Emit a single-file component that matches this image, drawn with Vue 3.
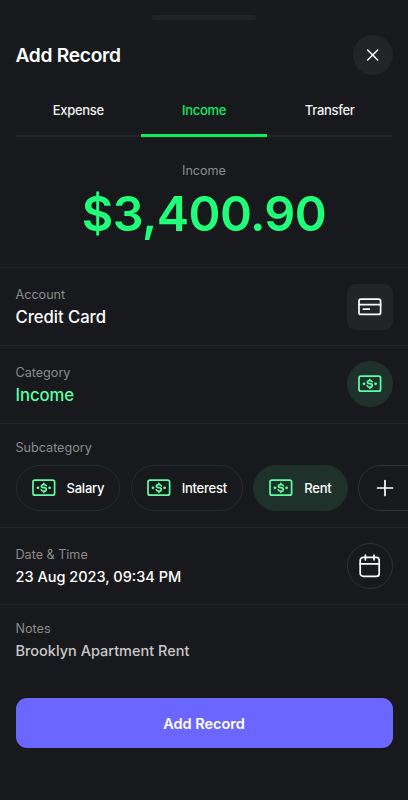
<template>
  <div class="record-sheet">
    <div class="drag-handle"></div>

    <header class="sheet-header">
      <h1 class="sheet-title">Add Record</h1>
      <button class="close-btn" aria-label="Close">
        <svg width="40" height="40" viewBox="0 0 40 40">
          <path d="M14.7 15 L24.7 25 M24.7 15 L14.7 25" />
        </svg>
      </button>
    </header>

    <nav class="tabs">
      <button
        v-for="tab in tabs"
        :key="tab"
        class="tab"
        :class="{ active: tab === activeTab }"
        @click="activeTab = tab"
      >{{ tab }}</button>
    </nav>

    <section class="amount-block">
      <span class="label">{{ activeTab }}</span>
      <strong class="amount">$3,400.90</strong>
    </section>

    <section class="row">
      <div class="field">
        <span class="label">Account</span>
        <span class="value">Credit Card</span>
      </div>
      <div class="icon-box square">
        <svg width="24" height="24" viewBox="0 0 24 24">
          <rect x="1" y="4.2" width="21.6" height="15.2" rx="2" />
          <path d="M1 9.6 H22.6 M5.4 14.2 H11.4" />
        </svg>
      </div>
    </section>

    <section class="row">
      <div class="field">
        <span class="label">Category</span>
        <span class="value income">Income</span>
      </div>
      <div class="icon-box tinted">
        <svg class="cash" width="24" height="24" viewBox="0 0 24 24">
          <rect x="1" y="4.2" width="21.6" height="15" rx="2" />
          <path d="M14.3 9.8 C13.9 8.8 13 8.5 11.8 8.5 C10.3 8.5 9.4 9.2 9.4 10.2 C9.4 11.3 10.4 11.5 11.8 11.7 C13.3 11.9 14.3 12.3 14.3 13.4 C14.3 14.5 13.3 15.1 11.8 15.1 C10.5 15.1 9.6 14.7 9.2 13.7 M11.8 7.3 V8.6 M11.8 15 V16.3" />
          <circle cx="6" cy="11.8" r="1.4" />
          <circle cx="17.6" cy="11.8" r="1.4" />
        </svg>
      </div>
    </section>

    <section class="subcategory">
      <span class="label">Subcategory</span>
      <div class="chips">
        <button
          v-for="item in subcategories"
          :key="item"
          class="chip"
          :class="{ selected: item === selected }"
          @click="selected = item"
        >
          <svg class="cash" width="24" height="24" viewBox="0 0 24 24">
            <rect x="1" y="4.2" width="21.6" height="15" rx="2" />
            <path d="M14.3 9.8 C13.9 8.8 13 8.5 11.8 8.5 C10.3 8.5 9.4 9.2 9.4 10.2 C9.4 11.3 10.4 11.5 11.8 11.7 C13.3 11.9 14.3 12.3 14.3 13.4 C14.3 14.5 13.3 15.1 11.8 15.1 C10.5 15.1 9.6 14.7 9.2 13.7 M11.8 7.3 V8.6 M11.8 15 V16.3" />
            <circle cx="6" cy="11.8" r="1.4" />
            <circle cx="17.6" cy="11.8" r="1.4" />
          </svg>
          <span>{{ item }}</span>
        </button>
        <button class="chip add" aria-label="Add subcategory">
          <svg width="24" height="24" viewBox="0 0 24 24">
            <path d="M12 4.5 V19.5 M4.5 12 H19.5" />
          </svg>
        </button>
      </div>
    </section>

    <section class="row date-row">
      <div class="field">
        <span class="label">Date &amp; Time</span>
        <span class="value date">23 Aug 2023, 09:34 PM</span>
      </div>
      <div class="icon-box outlined">
        <svg width="24" height="24" viewBox="0 0 24 24">
          <rect x="2.2" y="3.4" width="19" height="19" rx="3" />
          <path d="M2.2 9.9 H21.2 M7.4 1.2 V5.8 M16 1.2 V5.8" />
        </svg>
      </div>
    </section>

    <section class="notes">
      <span class="label">Notes</span>
      <span class="value note">Brooklyn Apartment Rent</span>
    </section>

    <button class="submit-btn">Add Record</button>
  </div>
</template>

<script setup>
import { ref } from 'vue'

const tabs = ['Expense', 'Income', 'Transfer']
const activeTab = ref('Income')

const subcategories = ['Salary', 'Interest', 'Rent']
const selected = ref('Rent')
</script>

<style>
body {
  background: #18191c;
}
</style>

<style scoped>
.record-sheet {
  box-sizing: border-box;
  width: 100%;
  height: 800px;
  padding-top: 15px;
  overflow: hidden;
  display: flex;
  flex-direction: column;
  background: #18191c;
  color: #fff;
  font-family: Inter, "Liberation Sans", sans-serif;
}

.record-sheet * {
  box-sizing: border-box;
}

button {
  padding: 0;
  border: none;
  background: none;
  color: inherit;
  font-family: inherit;
  cursor: pointer;
}

svg {
  display: block;
  flex: none;
  fill: none;
  stroke: #fff;
  stroke-width: 1.7;
  stroke-linecap: round;
  stroke-linejoin: round;
}

.drag-handle {
  flex: none;
  align-self: center;
  width: 104px;
  height: 5px;
  border-radius: 3px;
  background: #222327;
}

/* --- Header --- */
.sheet-header {
  flex: none;
  display: flex;
  align-items: center;
  justify-content: space-between;
  height: 40px;
  margin-top: 15px;
  padding: 0 15.5px;
}

.sheet-title {
  margin: 0;
  font-size: 19.2px;
  font-weight: 600;
  line-height: 24px;
  letter-spacing: -0.3px;
}

.close-btn {
  width: 40px;
  height: 40px;
  border-radius: 50%;
  background: #232428;
}

.close-btn svg {
  stroke-width: 1.5;
}

/* --- Tabs --- */
.tabs {
  flex: none;
  display: grid;
  grid-template-columns: repeat(3, 1fr);
  height: 52px;
  margin: 10px 15.5px 0;
  box-shadow: inset 0 -2px 0 #232428;
}

.tab {
  font-size: 13px;
  font-weight: 500;
  letter-spacing: -0.3px;
  color: #f1f1f2;
  border-bottom: 3px solid transparent;
}

.tab.active {
  color: #08ee60;
  border-bottom-color: #08ee60;
}

/* --- Amount --- */
.amount-block {
  flex: none;
  display: flex;
  flex-direction: column;
  align-items: center;
  height: 130.4px;
  padding-top: 25px;
}

.label {
  font-size: 12.6px;
  font-weight: 400;
  line-height: 18px;
  color: #8a8b8d;
}

.amount {
  margin-top: 5px;
  font-size: 48.5px;
  font-weight: 600;
  line-height: 58px;
  letter-spacing: -0.6px;
  color: #20ff79;
}

/* --- Rows --- */
.row {
  flex: none;
  display: flex;
  align-items: center;
  justify-content: space-between;
  height: 77.6px;
  padding: 0 15.5px;
  border-top: 1px solid #232428;
}

.field {
  display: flex;
  flex-direction: column;
  padding-top: 3px;
}

.date-row .field {
  padding-top: 4px;
}

.value {
  font-size: 16.7px;
  font-weight: 500;
  line-height: 26px;
  letter-spacing: -0.05px;
}

.value.income {
  color: #5dffa2;
}

.value.date,
.value.note {
  font-size: 14.5px;
  letter-spacing: 0;
}

.value.note {
  color: #c9c9ca;
}

.icon-box {
  display: flex;
  align-items: center;
  justify-content: center;
  width: 46px;
  height: 46px;
  border-radius: 50%;
}

.icon-box.square {
  border-radius: 9px;
  background: #232428;
}

.icon-box.tinted {
  background: #1f312b;
}

.icon-box.outlined {
  border: 1px solid #303135;
}

.cash {
  stroke: #5dffa2;
}

.cash circle {
  fill: #5dffa2;
  stroke: none;
}

/* --- Subcategory --- */
.subcategory {
  flex: none;
  height: 104.2px;
  padding: 15px 0 0 15.5px;
  border-top: 1px solid #232428;
  overflow: hidden;
}

.subcategory .label {
  display: block;
}

.chips {
  display: flex;
  gap: 10.3px;
  margin-top: 8px;
}

.chip {
  flex: none;
  display: flex;
  align-items: center;
  gap: 11px;
  height: 46px;
  padding: 0 15px;
  border: 1px solid #1f312b;
  border-radius: 23px;
  font-size: 13px;
  font-weight: 500;
  letter-spacing: -0.22px;
}

.chip.selected {
  background: #1f312b;
}

.chip.add {
  width: 104px;
  padding-left: 14px;
  border-color: #303135;
}

/* --- Notes --- */
.notes {
  flex: none;
  display: flex;
  flex-direction: column;
  height: 93.7px;
  padding: 15px 15.5px 0;
  border-top: 1px solid #232428;
}

.submit-btn {
  flex: none;
  height: 50px;
  margin: 0 15.5px;
  border-radius: 11px;
  background: #6b66ff;
  font-size: 14.5px;
  font-weight: 600;
}
</style>
